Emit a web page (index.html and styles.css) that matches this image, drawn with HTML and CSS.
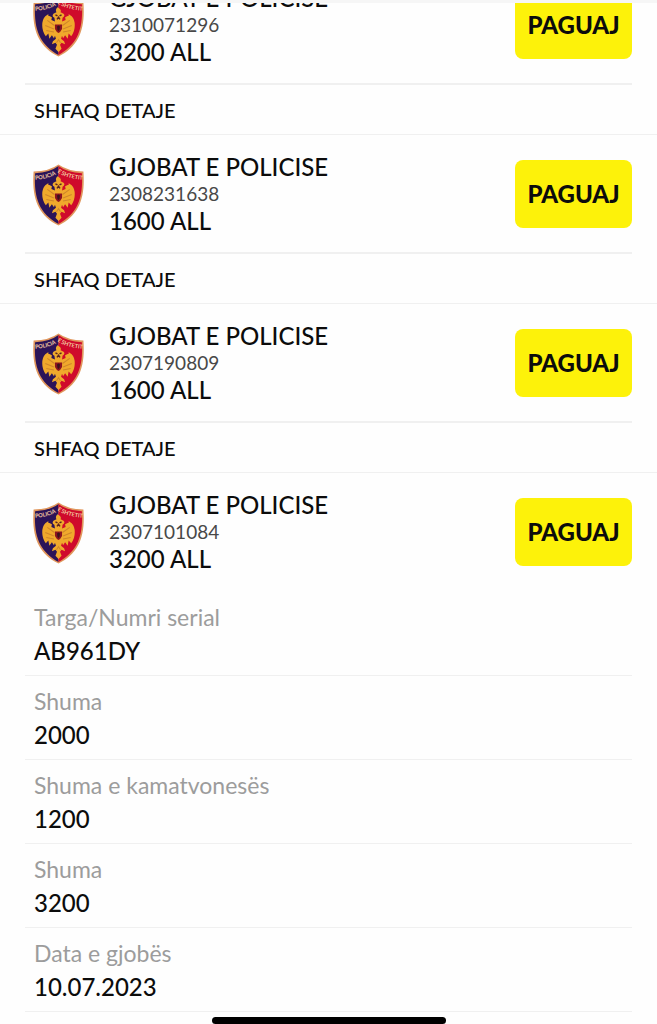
FILE: index.html
```html
<!DOCTYPE html>
<html lang="sq">
<head>
    <meta charset="UTF-8">
    <meta name="viewport" content="width=device-width, initial-scale=1">
    <title>Gjobat e Policise</title>
    <link rel="stylesheet" href="styles.css">
</head>
<body>
    <!-- shield, used by every fine -->
    <svg class="defs" aria-hidden="true">
        <symbol id="shield" viewBox="0 0 100 122">
            <path d="M50 1Q32 14 1 15C-3 68 10 101 50 121C90 101 103 68 99 15Q68 14 50 1Z" fill="#e0965c"/>
            <path d="M50 4Q33 17 4 18C1 68 13 97 50 118Z" fill="#2b1458"/>
            <path d="M50 4Q67 17 96 18C99 68 87 97 50 118Z" fill="#cf0a2b"/>
            <path d="M48 24Q43 29 46 34L40 37Q36 42 42 45L43 52L36 49L37 44L29 40L31 37L24 42Q18 48 18 60Q18 72 25 81L30 76L32 86L37 79L41 85L43 80L45 86L39 91L37 97L44 94L47 98L44 106L50 112L56 106L53 98L56 94L63 97L61 91L55 86L57 80L59 85L63 79L68 86L70 76L75 81Q82 72 82 60Q82 48 76 42L69 37L71 40L63 44L64 49L57 52L58 45Q64 41 60 37L54 34Q57 29 48 24Z" fill="#f0a92c"/>
            <path d="M28 50L42 60M24 60L41 67M26 70L41 73M72 50L58 60M76 60L59 67M74 70L59 73M46 94L50 88L54 94" fill="none" stroke="#cf862a" stroke-width="2"/>
            <path d="M44 39L48 41M56 39L52 41M47 48L50 44L53 48" fill="none" stroke="#5c2320" stroke-width="3"/>
            <path d="M43 58H57V67Q54 73 50 75Q46 73 43 67Z" fill="#8c1420"/>
            <path d="M47 62L50 60L53 62L52 69L50 71L48 69Z" fill="#3a101c"/>
            <path id="arc" d="M4 31Q32 29 50 18Q68 29 99 31" fill="none"/>
            <text class="shield_text"><textPath href="#arc">POLICIA E SHTETIT</textPath></text>
        </symbol>
    </svg>

    <main class="screen">
        <div class="list">
            <article class="fine">
                <div class="fine_head">
                    <svg class="shield" aria-hidden="true"><use href="#shield"/></svg>
                    <div class="info">
                        <h2>GJOBAT E POLICISE</h2>
                        <p class="number">2310071296</p>
                        <p class="amount">3200 ALL</p>
                    </div>
                    <button class="pay" type="button">PAGUAJ</button>
                </div>
                <button class="toggle" type="button">SHFAQ DETAJE</button>
            </article>
            <article class="fine">
                <div class="fine_head">
                    <svg class="shield" aria-hidden="true"><use href="#shield"/></svg>
                    <div class="info">
                        <h2>GJOBAT E POLICISE</h2>
                        <p class="number">2308231638</p>
                        <p class="amount">1600 ALL</p>
                    </div>
                    <button class="pay" type="button">PAGUAJ</button>
                </div>
                <button class="toggle" type="button">SHFAQ DETAJE</button>
            </article>
            <article class="fine">
                <div class="fine_head">
                    <svg class="shield" aria-hidden="true"><use href="#shield"/></svg>
                    <div class="info">
                        <h2>GJOBAT E POLICISE</h2>
                        <p class="number">2307190809</p>
                        <p class="amount">1600 ALL</p>
                    </div>
                    <button class="pay" type="button">PAGUAJ</button>
                </div>
                <button class="toggle" type="button">SHFAQ DETAJE</button>
            </article>
            <article class="fine open">
                <div class="fine_head">
                    <svg class="shield" aria-hidden="true"><use href="#shield"/></svg>
                    <div class="info">
                        <h2>GJOBAT E POLICISE</h2>
                        <p class="number">2307101084</p>
                        <p class="amount">3200 ALL</p>
                    </div>
                    <button class="pay" type="button">PAGUAJ</button>
                </div>
                <dl class="details">
                    <div>
                        <dt>Targa/Numri serial</dt>
                        <dd>AB961DY</dd>
                    </div>
                    <div>
                        <dt>Shuma</dt>
                        <dd>2000</dd>
                    </div>
                    <div>
                        <dt>Shuma e kamatvonesës</dt>
                        <dd>1200</dd>
                    </div>
                    <div>
                        <dt>Shuma</dt>
                        <dd>3200</dd>
                    </div>
                    <div>
                        <dt>Data e gjobës</dt>
                        <dd>10.07.2023</dd>
                    </div>
                </dl>
            </article>
        </div>
    </main>
    <div class="home_bar"></div>
</body>
</html>
```
FILE: styles.css
```css
*{
    margin: 0;
    padding: 0;
    box-sizing: border-box;
}
body{
    background-color: #fefefe;
    color: #0c0c0c;
    font-family: Lato, "Open Sans", sans-serif;
}
button{
    border: 0;
    background: none;
    color: inherit;
    font-family: inherit;
    cursor: pointer;
}
.defs{
    display: block;
    width: 0;
    height: 0;
}
.screen{
    height: 100vh;
    overflow: hidden;
    border-top: 3px solid #f6f6f6;
}
/* the list is scrolled a little under the top edge */
.list{
    margin-top: -37px;
}
.fine{
    border-bottom: 1px solid #f0f0f0;
}
.fine:last-child{
    border-bottom: 0;
}
.fine_head{
    display: flex;
    align-items: center;
    height: 119px;
    margin: 0 25px;
    padding-left: 8px;
    border-bottom: 2px solid #f0f0f0;
}
.open .fine_head{
    border-bottom-color: transparent;
}
.shield{
    width: 51px;
    height: 62px;
    margin-top: 2px;
}
.shield_text{
    fill: #f3c9a0;
    font-size: 11px;
    font-weight: 700;
}
.info{
    flex: 1;
    margin-left: 25px;
}
.info h2{
    font-size: 24px;
    line-height: 28px;
}
.number{
    color: #484848;
    font-size: 19px;
    line-height: 26px;
}
.amount{
    font-size: 24px;
    line-height: 28px;
}
.info h2, .amount, .toggle, .details dd{
    font-weight: 500;
}
.pay{
    width: 117px;
    height: 68px;
    border-radius: 8px;
    background-color: #fdf20a;
    font-size: 24px;
    font-weight: 900;
}
.toggle{
    display: block;
    width: 100%;
    height: 49px;
    padding-left: 34px;
    font-size: 20px;
    text-align: left;
}
.details{
    margin: 0 25px;
}
.details div{
    padding: 8px 9px;
    border-bottom: 1px solid #f0f0f0;
}
.details dt{
    color: #9c9c9c;
    font-size: 23px;
    line-height: 34px;
}
.details dd{
    font-size: 24px;
    line-height: 33px;
}
/* home indicator */
.home_bar{
    position: fixed;
    left: 50%;
    bottom: 0;
    width: 234px;
    height: 7px;
    border-radius: 4px;
    background-color: #000;
    transform: translateX(-50%);
}
```
